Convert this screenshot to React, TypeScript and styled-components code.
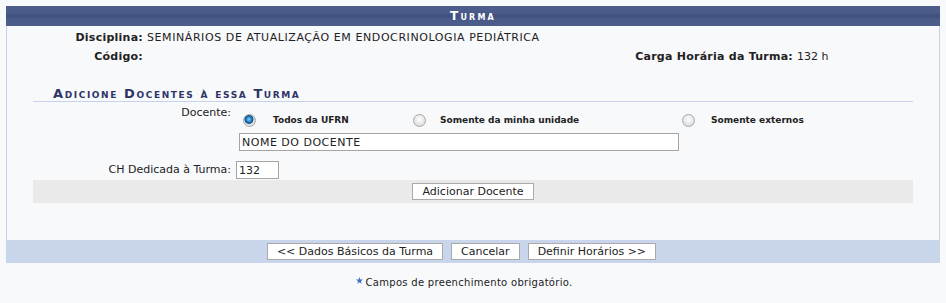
import React from 'react';
import styled, { createGlobalStyle } from 'styled-components';

const GlobalStyle = createGlobalStyle`
  html, body {
    margin: 0;
    padding: 0;
    background: #f8f9fb;
    font-family: "DejaVu Sans", Verdana, sans-serif;
    font-size: 11px;
    color: #222;
  }
`;

const Page = styled.div`
  padding: 6px 6px 0 6px;
  width: 934px;
`;

const Caption = styled.div`
  height: 20px;
  line-height: 20px;
  text-align: center;
  color: #fff;
  font-weight: bold;
  font-variant: small-caps;
  font-size: 12px;
  letter-spacing: 2.2px;
  background: linear-gradient(#4d5d8c 0%, #4a5a89 35%, #404f7d 50%, #4a5a89 65%, #4d5d8c 100%);
`;

const Body = styled.div`
  border-left: 1px solid #c6d3ea;
  border-right: 1px solid #c6d3ea;
  padding: 3px 0 37px 0;
`;

const InfoGrid = styled.div`
  display: grid;
  grid-template-columns: 140px 1fr auto 142px;
  row-gap: 2px;
  line-height: 17px;
`;

const InfoLabel = styled.div`
  font-weight: bold;
  text-align: right;
  padding-right: 4px;
  letter-spacing: 0.25px;
`;

const InfoValue = styled.div<{ $span?: number; $caps?: boolean }>`
  grid-column: span ${(p) => p.$span ?? 1};
  letter-spacing: ${(p) => (p.$caps ? '0.58px' : '0')};
`;

const Section = styled.div`
  margin: 0 26px;
`;

const SubTitle = styled.div`
  margin-top: 22px;
  padding: 0 0 1px 20px;
  border-bottom: 1px solid #c6d3ea;
  color: #2f3466;
  font-weight: bold;
  font-variant: small-caps;
  font-size: 13px;
  letter-spacing: 1.6px;
  line-height: 13px;
`;

const FormRow = styled.div<{ $top?: number }>`
  display: grid;
  grid-template-columns: 198px 1fr;
  column-gap: 5px;
  margin-top: ${(p) => p.$top ?? 0}px;
  align-items: ${(p) => (p.$top ? 'center' : 'start')};
`;

const FormLabel = styled.label<{ $top?: number }>`
  text-align: right;
  line-height: 16px;
  margin-top: ${(p) => p.$top ?? 0}px;
`;

const RadioLine = styled.div`
  display: flex;
  align-items: center;
  padding-left: 7px;
  height: 20px;
  margin-top: 8px;
`;

const RadioOption = styled.label<{ $w: number; $gap: number }>`
  display: flex;
  align-items: center;
  width: ${(p) => p.$w}px;
  gap: ${(p) => p.$gap}px;
  font-weight: bold;
  font-size: 9px;
`;

const Radio = styled.input.attrs({ type: 'radio' })`
  appearance: none;
  margin: 0;
  width: 13px;
  height: 13px;
  border-radius: 50%;
  border: 1px solid #a8a8a8;
  background: radial-gradient(circle at 50% 40%, #ffffff 0%, #e4e4e4 60%, #cfcfcf 100%);
  box-sizing: border-box;
  &:checked {
    background: radial-gradient(circle at 45% 40%, #8fd0f5 0%, #1f7fc4 30%, #0a4f8c 45%, #e6e6e6 55%, #d0d0d0 100%);
  }
`;

const TextInput = styled.input<{ $w: number; $ml?: number }>`
  box-sizing: border-box;
  width: ${(p) => p.$w}px;
  height: 18px;
  margin: 0 0 0 ${(p) => p.$ml ?? 0}px;
  padding: 0 2px;
  border: 1px solid #a5a5a5;
  background: #fff;
  font-family: "DejaVu Sans", Verdana, sans-serif;
  font-size: 11px;
  color: #222;
  outline: none;
`;

const NameInput = styled(TextInput)`
  display: block;
  margin-top: 3px;
  letter-spacing: 0.5px;
`;

const ActionBar = styled.div<{ $bg: string; $shift?: number }>`
  display: flex;
  justify-content: center;
  align-items: center;
  gap: 8px;
  height: 23px;
  padding-right: ${(p) => p.$shift ?? 0}px;
  background: ${(p) => p.$bg};
`;

const Button = styled.button`
  height: 17px;
  padding: 0 9px;
  border: 1px solid #aaa;
  background: #fff;
  font-family: "DejaVu Sans", Verdana, sans-serif;
  font-size: 11px;
  color: #222;
  line-height: 15px;
  cursor: pointer;
`;

const Note = styled.div`
  display: flex;
  justify-content: center;
  align-items: flex-start;
  margin-top: 13px;
  padding-right: 17px;
  font-size: 10px;
  line-height: 14px;
  letter-spacing: 0.3px;
`;

const Star = styled.svg`
  width: 7px;
  height: 7px;
  margin: 1px 2px 0 0;
`;

export default function App() {
  return (
    <Page>
      <GlobalStyle />
      <Caption>Turma</Caption>
      <Body>
        <InfoGrid>
          <InfoLabel>Disciplina:</InfoLabel>
          <InfoValue $span={3} $caps>
            SEMINÁRIOS DE ATUALIZAÇÃO EM ENDOCRINOLOGIA PEDIÁTRICA
          </InfoValue>
          <InfoLabel>Código:</InfoLabel>
          <InfoValue />
          <InfoLabel>Carga Horária da Turma:</InfoLabel>
          <InfoValue>132 h</InfoValue>
        </InfoGrid>
        <Section>
          <SubTitle>Adicione Docentes à essa Turma</SubTitle>
          <FormRow>
            <FormLabel $top={3}>Docente:</FormLabel>
            <div>
              <RadioLine>
                <RadioOption $w={170} $gap={17}>
                  <Radio name="tipo" defaultChecked />
                  Todos da UFRN
                </RadioOption>
                <RadioOption $w={269} $gap={14}>
                  <Radio name="tipo" />
                  Somente da minha unidade
                </RadioOption>
                <RadioOption $w={200} $gap={16}>
                  <Radio name="tipo" />
                  Somente externos
                </RadioOption>
              </RadioLine>
              <NameInput $w={440} $ml={3} defaultValue="NOME DO DOCENTE" />
            </div>
          </FormRow>
          <FormRow $top={10}>
            <FormLabel>CH Dedicada à Turma:</FormLabel>
            <TextInput $w={43} defaultValue="132" />
          </FormRow>
          <ActionBar $bg="#eaeaea" style={{ marginTop: 1 }}>
            <Button>Adicionar Docente</Button>
          </ActionBar>
        </Section>
      </Body>
      <ActionBar $bg="#c8d5ea" $shift={23}>
        <Button>&lt;&lt; Dados Básicos da Turma</Button>
        <Button>Cancelar</Button>
        <Button>Definir Horários &gt;&gt;</Button>
      </ActionBar>
      <Note>
        <Star viewBox="0 0 10 10">
          <path d="M5 0 L6.2 3.6 L10 3.7 L7 6 L8.1 9.7 L5 7.5 L1.9 9.7 L3 6 L0 3.7 L3.8 3.6 Z" fill="#3a6fc4" />
        </Star>
        Campos de preenchimento obrigatório.
      </Note>
    </Page>
  );
}
